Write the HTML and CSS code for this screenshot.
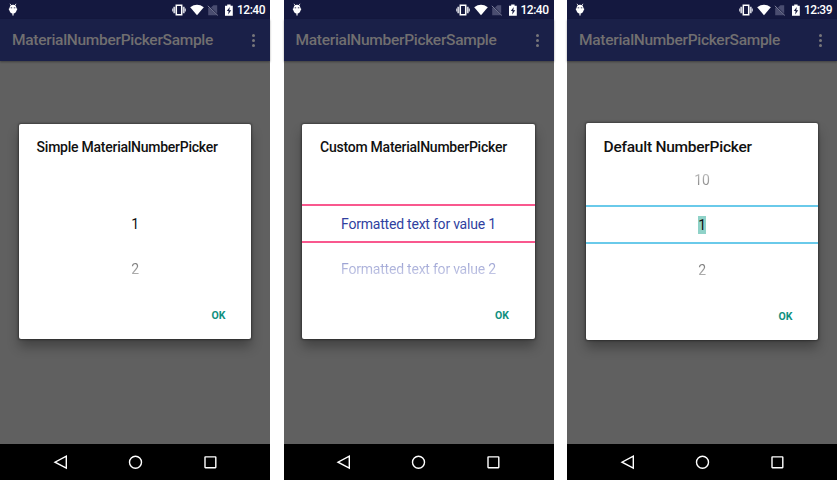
FILE: index.html
```
<!DOCTYPE html>
<html lang="en">
<head>
<meta charset="utf-8">
<title>MaterialNumberPickerSample</title>
<link rel="stylesheet" href="styles.css">
</head>
<body>
<svg width="0" height="0" class="defs">
  <symbol id="bug" viewBox="0 0 10 14"><path d="M2 .8 3.2 2.6M8 .8 6.8 2.6" stroke="#fff" stroke-width=".8"/><path d="M5 1.8C7.6 1.8 8.3 3.6 8.5 5.2L9.4 6 8.6 7.4C8 9.2 6.9 10.3 5.6 10.4V12.6H4.4V10.4C3.1 10.3 2 9.2 1.4 7.4L.6 6 1.5 5.2C1.7 3.6 2.4 1.8 5 1.8Z" fill="#fff"/><path d="M2.7 4.8H4.2M5.8 4.8H7.3" stroke="#14183f" stroke-width=".8"/></symbol>
  <symbol id="status" viewBox="0 0 62 14">
    <path d="M4.3 2.2H9.7V11.8H4.3Z" fill="none" stroke="#fff" stroke-width="1.5"/>
    <path d="M2.3 3.8V10.2M11.7 3.8V10.2" stroke="#d0d1dc" stroke-width="1.9"/><path d="M.8 5.4V8.6M13.2 5.4V8.6" stroke="#c9cad7" stroke-width="1.4"/>
    <path d="M18.2 4.2Q25 -.5 31.8 4.2L25 12.3Z" fill="#fff"/>
    <path d="M37.2 4.8 45.2 12.2H36.2V4.8ZM39 4.6 41.4 2.2H45.2V10.6Z" fill="#4a4d70"/><path d="M35.8 2.8 45.8 12.4" stroke="#80829c" stroke-width="1"/>
    <path d="M53 2.7H55.2V1.4H58.6V2.7H60.8V12.8H53Z" fill="#fff"/><path d="M57.8 4 54.8 8H56.6L56.2 11.4 59.2 7.2H57.3Z" fill="#14183f"/>
  </symbol>
  <symbol id="nav" viewBox="0 0 170 16" fill="none" stroke="#fff" stroke-width="1.4"><path d="M14.3 2.1V14.2L3 8.2Z"/><circle cx="83.5" cy="8.2" r="6"/><rect x="153" y="2.9" width="10.8" height="10.8" rx=".4"/></symbol>
</svg>
<main class="gallery">
  <section class="phone">
    <header class="status"><svg class="bug"><use href="#bug"/></svg><svg class="indicators"><use href="#status"/></svg><span class="time">12:40</span></header>
    <div class="appbar"><span class="app-title">MaterialNumberPickerSample</span><span class="more"><i></i><i></i><i></i></span></div>
    <div class="content">
      <div class="dialog">
        <h2 class="title">Simple MaterialNumberPicker</h2>
        <div class="picker"><div class="value prev"></div><div class="value current">1</div><div class="value next">2</div></div>
        <div class="actions">OK</div>
      </div>
    </div>
    <footer class="navbar"><svg class="nav"><use href="#nav"/></svg></footer>
  </section>
  <section class="phone">
    <header class="status"><svg class="bug"><use href="#bug"/></svg><svg class="indicators"><use href="#status"/></svg><span class="time">12:40</span></header>
    <div class="appbar"><span class="app-title">MaterialNumberPickerSample</span><span class="more"><i></i><i></i><i></i></span></div>
    <div class="content">
      <div class="dialog custom">
        <h2 class="title">Custom MaterialNumberPicker</h2>
        <div class="picker"><div class="value prev"></div><div class="value current">Formatted text for value 1</div><div class="value next">Formatted text for value 2</div></div>
        <div class="actions">OK</div>
      </div>
    </div>
    <footer class="navbar"><svg class="nav"><use href="#nav"/></svg></footer>
  </section>
  <section class="phone">
    <header class="status"><svg class="bug"><use href="#bug"/></svg><svg class="indicators"><use href="#status"/></svg><span class="time">12:39</span></header>
    <div class="appbar"><span class="app-title">MaterialNumberPickerSample</span><span class="more"><i></i><i></i><i></i></span></div>
    <div class="content">
      <div class="dialog default">
        <h2 class="title">Default NumberPicker</h2>
        <div class="picker"><div class="value prev">10</div><div class="value current"><span class="selected">1</span></div><div class="value next">2</div></div>
        <div class="actions">OK</div>
      </div>
    </div>
    <footer class="navbar"><svg class="nav"><use href="#nav"/></svg></footer>
  </section>
</main>
</body>
</html>
```
FILE: styles.css
```
* { box-sizing: border-box; }
body { margin: 0; background: #fff; font-family: Roboto, sans-serif; overflow: hidden; }
.defs { display: none; }
.gallery { display: grid; grid-template-columns: repeat(3, 270px); gap: 13.5px; width: 837px; height: 480px; }
.phone { display: grid; grid-template-rows: 19px 42px 383px 36px; height: 480px; }
.status { display: flex; align-items: center; background: #14183f; color: #fff; padding: 0 5px 0 8px; }
.bug { width: 10px; height: 14px; margin-top: 1px; }
.indicators { width: 62px; height: 14px; margin-left: auto; }
.time { width: 28px; margin-left: 3px; font-size: 12px; font-weight: 500; line-height: 20px; letter-spacing: -.5px; white-space: nowrap; }
.appbar { display: flex; align-items: center; justify-content: space-between; padding: 0 15px 0 12px; background: #1a2048; color: #716f70; z-index: 1; box-shadow: 0 1px 2px rgba(0, 0, 0, .35); }
.app-title { font-size: 15.5px; font-weight: 500; letter-spacing: -.29px; line-height: 43px; }
.more { display: grid; gap: 2px; }
.more i { width: 3px; height: 3px; border-radius: 50%; background: #77767a; }
.content { background: #606060; padding: 63px 18.7px 0 18.6px; }
.dialog { display: grid; grid-template-rows: 46px 137px 32px; height: 215px; background: #fff; border-radius: 2px; box-shadow: 0 0 2px 1px rgba(0, 0, 0, .35), 0 8px 12px rgba(0, 0, 0, .3); }
.title { margin: 0; padding-left: 18px; font-size: 14px; font-weight: 500; letter-spacing: -.25px; line-height: 47px; color: #111; white-space: nowrap; }
.picker { display: grid; grid-template-rows: 34px 39px 64px; text-align: center; font-size: 14px; letter-spacing: -.22px; }
.value { line-height: 41px; }
.current { color: #111; }
.next { line-height: 53px; color: transparent; background: linear-gradient(#777 20px, #c2c2c2 35px); background-clip: text; -webkit-background-clip: text; }
.actions { justify-self: end; padding-right: 26px; font-size: 10.5px; font-weight: 700; line-height: 18px; color: #109080; }
.custom .current { color: #303f9f; border: solid #f9588e; border-width: 2px 0; line-height: 37px; }
.custom .next { background-image: linear-gradient(#9ba2d3 20px, #d0d3eb 35px); }
.default { height: 217px; margin-top: -1px; grid-template-rows: 47px 138px 32px; }
.default .title { font-size: 15.5px; letter-spacing: -.25px; line-height: 49px; }
.default .picker { grid-template-rows: 35px 39px 64px; }
.default .prev { line-height: 21px; color: transparent; background: linear-gradient(#b5b5b5 5px, #808080 18px); background-clip: text; -webkit-background-clip: text; }
.default .current { border: solid #6acaea; border-width: 2px 0; line-height: 37px; }
.selected { display: inline-block; line-height: 18px; background: #8fd2c8; }
.navbar { display: flex; justify-content: center; align-items: center; background: #000; padding-left: 3px; }
.nav { width: 170px; height: 16px; }
```
